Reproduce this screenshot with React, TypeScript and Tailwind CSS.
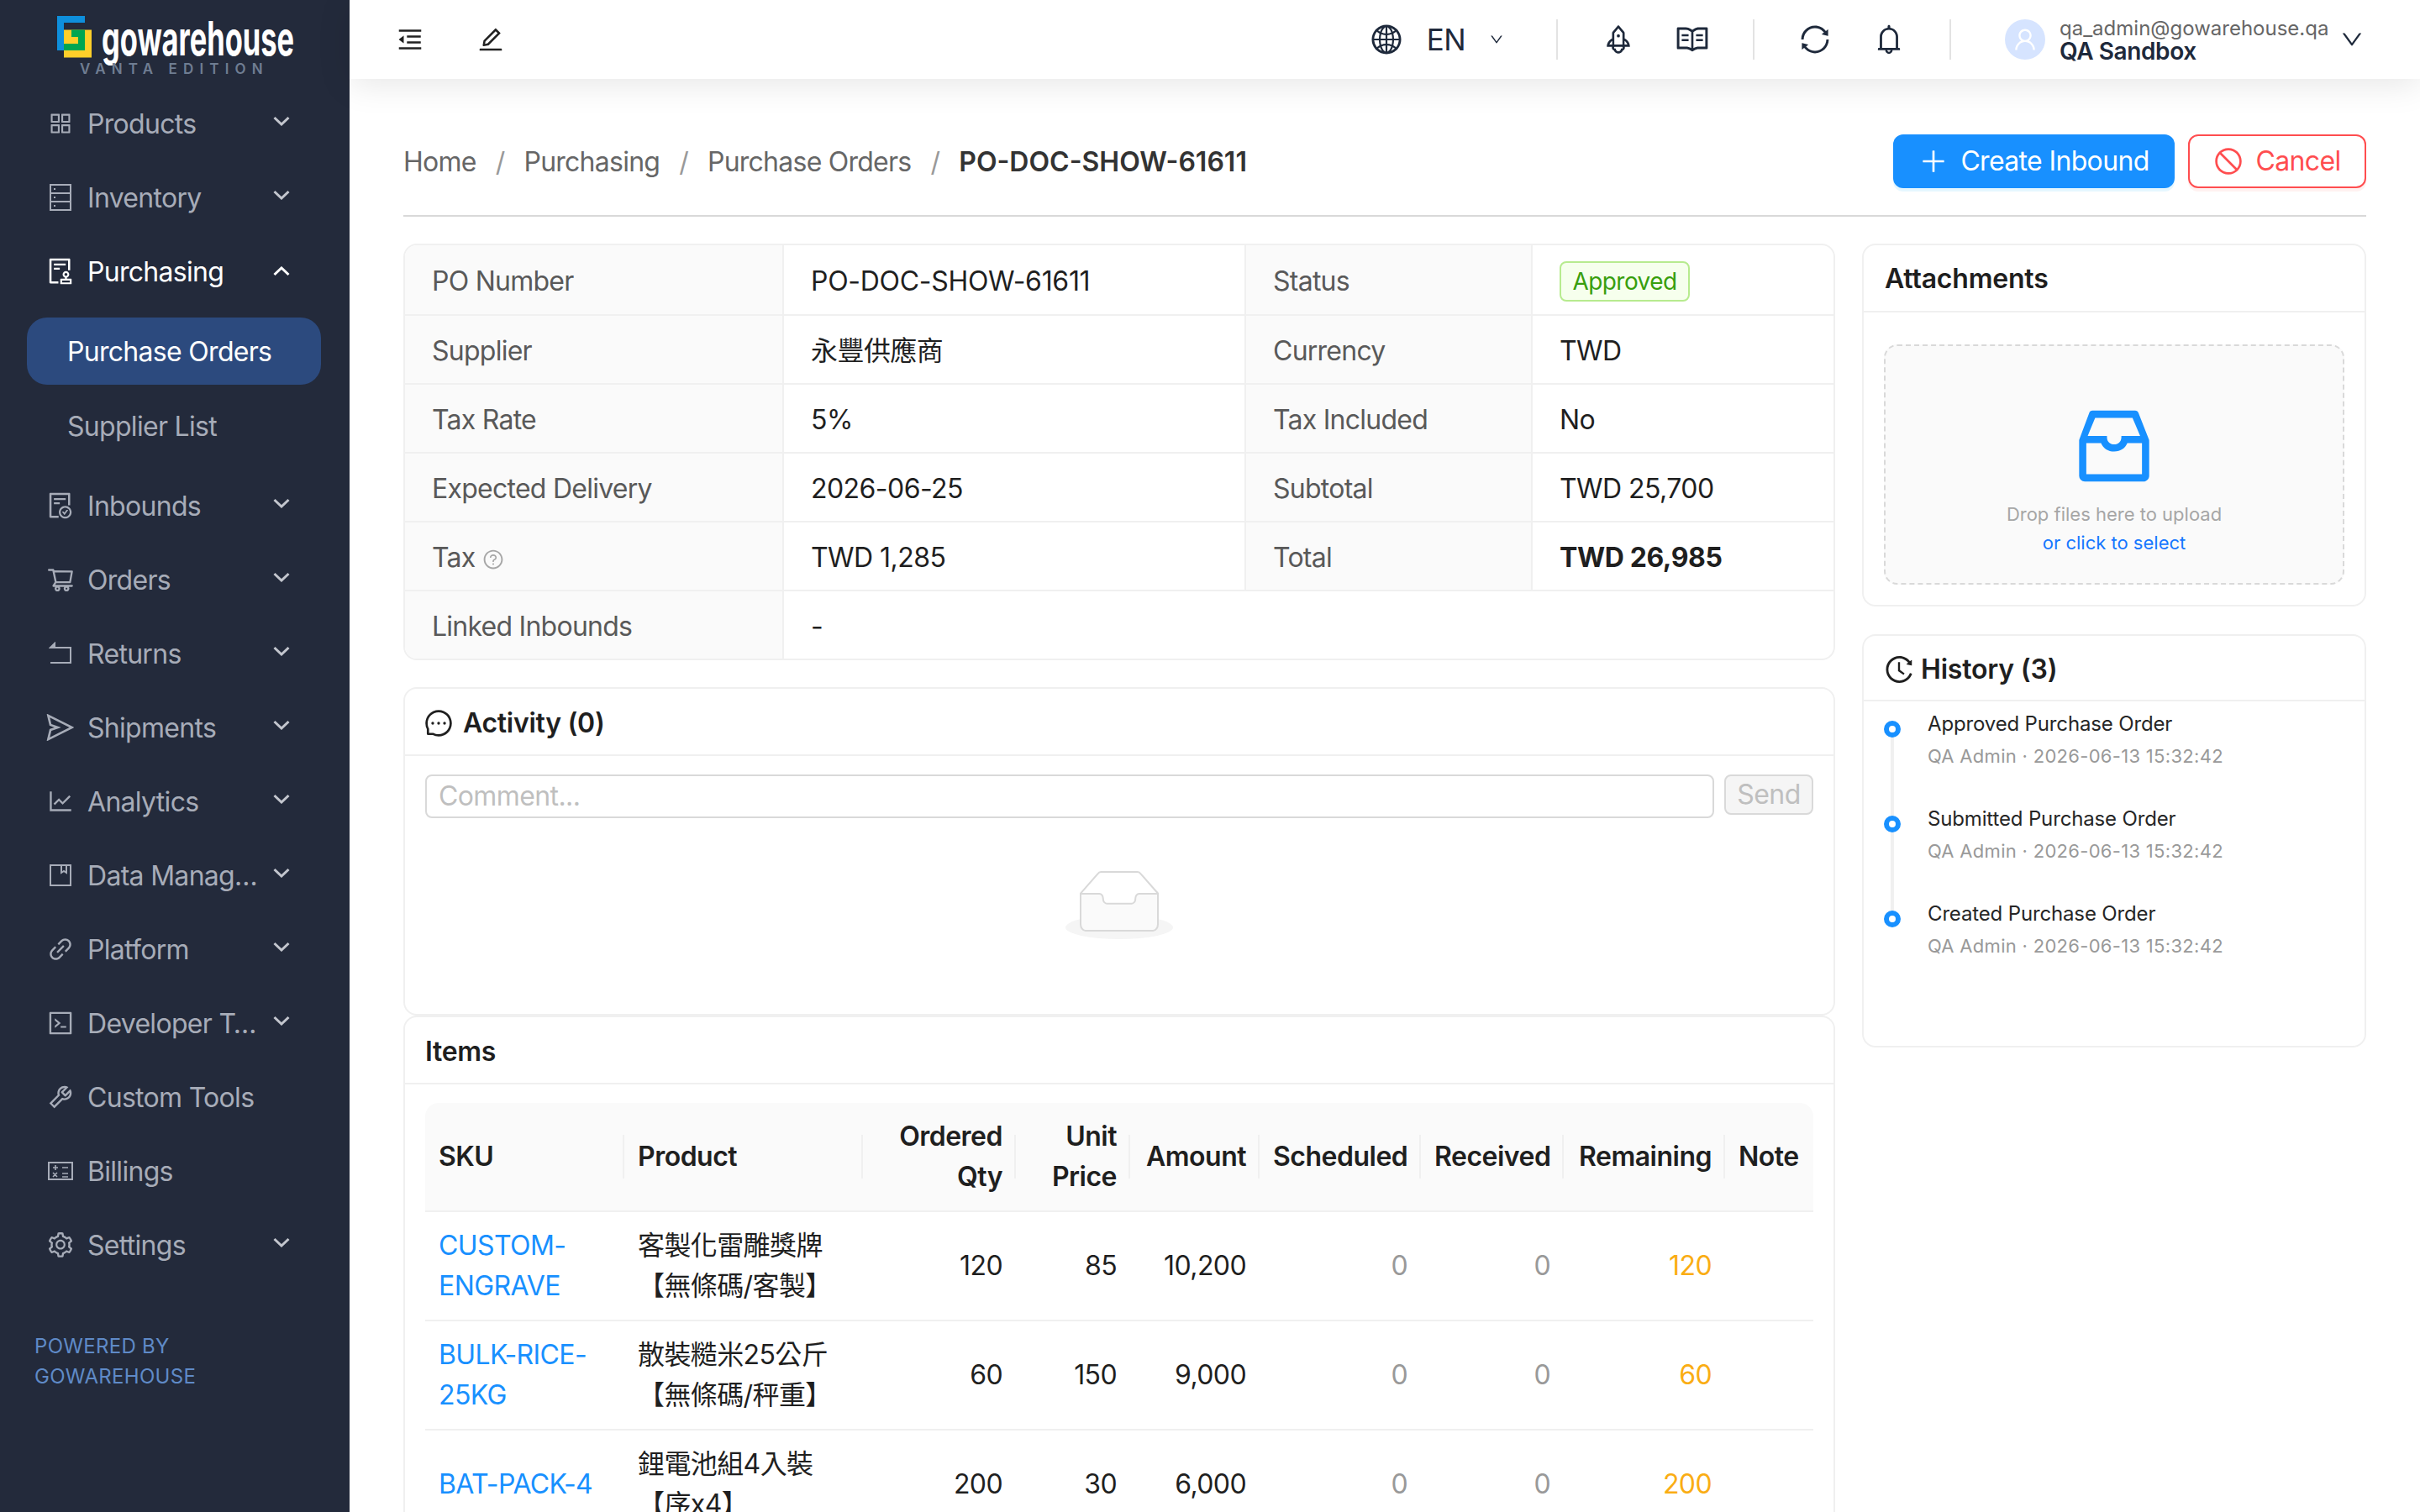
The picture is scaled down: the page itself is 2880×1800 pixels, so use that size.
import type { ReactNode } from "react";
import {
  AiOutlineAppstore,
  AiOutlineAudit,
  AiOutlineBell,
  AiOutlineCode,
  AiOutlineDown,
  AiOutlineEdit,
  AiOutlineFileDone,
  AiOutlineGlobal,
  AiOutlineHistory,
  AiOutlineInbox,
  AiOutlineLineChart,
  AiOutlineLink,
  AiOutlineMenuFold,
  AiOutlineMessage,
  AiOutlinePlus,
  AiOutlineQuestionCircle,
  AiOutlineRead,
  AiOutlineRocket,
  AiOutlineSend,
  AiOutlineSetting,
  AiOutlineShoppingCart,
  AiOutlineStop,
  AiOutlineSync,
  AiOutlineTool,
  AiOutlineUser,
} from "react-icons/ai";

function InventoryIcon() {
  return (
    <svg width="28" height="32" viewBox="0 0 28 32" fill="none" stroke="currentColor" strokeWidth="2">
      <rect x="2" y="1" width="24" height="30" />
      <path d="M2 11h24M2 21h24" />
      <path d="M6 6h2M6 16h2M6 26h2" />
    </svg>
  );
}

function ReturnsIcon() {
  return (
    <svg width="28" height="28" viewBox="0 0 28 28" fill="none" stroke="currentColor" strokeWidth="2">
      <path d="M2 25h24V7H6" />
      <path d="M7 2 2 7l5 0z" fill="currentColor" />
    </svg>
  );
}

function DataIcon() {
  return (
    <svg width="28" height="28" viewBox="0 0 28 28" fill="none" stroke="currentColor" strokeWidth="2">
      <rect x="2" y="2" width="24" height="24" />
      <path d="M15 2v9l3-2 3 2V2" />
    </svg>
  );
}

function BillingsIcon() {
  return (
    <svg width="30" height="22" viewBox="0 0 30 22" fill="none" stroke="currentColor" strokeWidth="2">
      <rect x="1" y="1" width="28" height="20" />
      <path d="M6 7h6M9 4v6M17 7h7M6 13l5 5M11 13l-5 5M17 14h7M17 18h7" strokeWidth="1.6" />
    </svg>
  );
}

function Chevron({ up }: { up?: boolean }) {
  return (
    <svg width="20" height="12" viewBox="0 0 20 12" fill="none" stroke="currentColor" strokeWidth="3" className={up ? "rotate-180" : ""}>
      <path d="M1.5 2 10 10l8.5-8" />
    </svg>
  );
}

function LogoMark() {
  return (
    <svg width="41" height="50" viewBox="0 0 41 50" className="shrink-0">
      <path d="M0 0h33v8H8v33H0z" fill="#0e8fdc" />
      <rect x="8" y="16.5" width="33" height="33" fill="#ffcf2a" />
      <path d="M17 16.5h16V41H8v-8h17v-8h-8z" fill="#00a651" />
    </svg>
  );
}

function EmptyIcon() {
  return (
    <svg width="128" height="82" viewBox="0 0 64 41">
      <g transform="translate(0 1)" fill="none" fillRule="evenodd">
        <ellipse fill="#f5f5f5" cx="32" cy="33" rx="32" ry="7" />
        <g fillRule="nonzero" stroke="#d9d9d9">
          <path d="M55 12.76L44.854 1.258C44.367.474 43.656 0 42.907 0H21.093c-.749 0-1.46.474-1.947 1.257L9 12.761V22h46v-9.24z" />
          <path
            d="M41.613 15.931c0-1.605.994-2.93 2.227-2.931H55v18.137C55 33.26 53.68 35 52.05 35h-40.1C10.32 35 9 33.259 9 31.137V13h11.16c1.233 0 2.227 1.323 2.227 2.928v.022c0 1.605 1.005 2.901 2.237 2.901h14.752c1.232 0 2.237-1.308 2.237-2.913v-.007z"
            fill="#fafafa"
          />
        </g>
      </g>
    </svg>
  );
}

function NavItem({ icon, label, arrow = true }: { icon: ReactNode; label: string; arrow?: boolean }) {
  return (
    <div className="flex h-[80px] items-center pl-[56px] text-[#a7acb8]">
      <span className="flex w-[32px] justify-center">{icon}</span>
      <span className="ml-[16px] w-[205px] truncate pt-[2px]">{label}</span>
      {arrow && (
        <span className="ml-[16px] -mt-[6px] text-[#c3c6ce]">
          <Chevron />
        </span>
      )}
    </div>
  );
}

function Sidebar() {
  return (
    <aside className="flex h-full w-[416px] shrink-0 flex-col bg-[#232a3b] text-[32px] tracking-[-0.7px]">
      <div className="relative h-[107px] shrink-0">
        <div className="absolute left-[68px] top-[19px]">
          <LogoMark />
        </div>
        <span className="absolute left-[121px] top-[21px] origin-left scale-x-[0.615] text-[56px] font-bold leading-[50px] tracking-normal text-white">
          gowarehouse
        </span>
        <span className="absolute left-[95px] top-[72px] text-[17px] font-semibold leading-[20px] tracking-[0.42em] text-[#6f7d92]">
          VANTA EDITION
        </span>
      </div>
      <nav className="flex flex-col gap-[8px]">
        <NavItem icon={<AiOutlineAppstore size={34} />} label="Products" />
        <NavItem icon={<InventoryIcon />} label="Inventory" />
        <div className="flex h-[80px] items-center pl-[56px] text-white">
          <span className="flex w-[32px] justify-center">
            <AiOutlineAudit size={36} className="shrink-0" />
          </span>
          <span className="ml-[16px] w-[205px] truncate pt-[2px]">Purchasing</span>
          <span className="ml-[16px]">
            <Chevron up />
          </span>
        </div>
        <div className="my-[7px] flex flex-col gap-[9px]">
          <div className="ml-[32px] mr-[34px] flex h-[80px] items-center rounded-[24px] bg-[#2c4a7e] pl-[48px] pt-[2px] text-white">Purchase Orders</div>
          <div className="flex h-[80px] items-center pl-[80px] pt-[2px] text-[#a7acb8]">Supplier List</div>
        </div>
        <NavItem icon={<AiOutlineFileDone size={36} className="shrink-0" />} label="Inbounds" />
        <NavItem icon={<AiOutlineShoppingCart size={34} className="shrink-0" />} label="Orders" />
        <NavItem icon={<ReturnsIcon />} label="Returns" />
        <NavItem icon={<AiOutlineSend size={38} className="shrink-0" />} label="Shipments" />
        <NavItem icon={<AiOutlineLineChart size={34} className="shrink-0" />} label="Analytics" />
        <NavItem icon={<DataIcon />} label="Data Management" />
        <NavItem icon={<AiOutlineLink size={34} className="shrink-0" />} label="Platform" />
        <NavItem icon={<AiOutlineCode size={34} className="shrink-0" />} label="Developer Tools" />
        <NavItem icon={<AiOutlineTool size={34} className="shrink-0" />} label="Custom Tools" arrow={false} />
        <NavItem icon={<BillingsIcon />} label="Billings" arrow={false} />
        <NavItem icon={<AiOutlineSetting size={34} className="shrink-0" />} label="Settings" />
      </nav>
      <div className="mt-[63px] pl-[41px] text-[24px] leading-[36px] tracking-[0.3px] text-[#5f8ac7]">
        POWERED BY
        <br />
        GOWAREHOUSE
      </div>
    </aside>
  );
}

function Divider() {
  return <div className="h-[48px] w-[2px] bg-[#e3e3e3]" />;
}

function Header() {
  return (
    <header className="relative z-10 flex h-[94px] shrink-0 items-center bg-white pl-[55px] pr-[66px] text-[#1e293b] shadow-[0_6px_40px_rgba(0,0,0,0.1)]">
      <AiOutlineMenuFold size={34} className="text-[#222]" />
      <AiOutlineEdit size={34} className="ml-[62px] text-[#222]" />
      <div className="ml-auto flex items-center">
        <AiOutlineGlobal size={40} />
        <span className="ml-[28px] text-[35px] leading-none">EN</span>
        <AiOutlineDown size={18} className="ml-[28px] mr-[62px]" />
        <Divider />
        <AiOutlineRocket size={40} className="ml-[52px]" />
        <AiOutlineRead size={42} className="ml-[47px]" />
        <span className="ml-[51px]">
          <Divider />
        </span>
        <AiOutlineSync size={40} className="ml-[52px]" />
        <AiOutlineBell size={40} className="ml-[48px]" />
        <span className="ml-[52px]">
          <Divider />
        </span>
        <div className="ml-[64px] flex h-[48px] w-[48px] items-center justify-center rounded-full bg-[#d6e4ff] text-white">
          <AiOutlineUser size={32} />
        </div>
        <div className="ml-[17px] flex w-[318px] flex-col">
          <span className="whitespace-nowrap text-[24px] leading-[28px] tracking-normal text-[#666]">qa_admin@gowarehouse.qa</span>
          <span className="text-[28px] font-semibold leading-[26px] tracking-[-0.4px]">QA Sandbox</span>
        </div>
        <AiOutlineDown size={30} className="ml-[15px]" />
      </div>
    </header>
  );
}

function Breadcrumbs() {
  return (
    <div className="flex h-[164px] items-center border-b-2 border-[#d9d9d9] pb-[32px] pt-[66px]">
      <div className="flex items-center gap-[23px] pt-[2px] tracking-[-0.75px] text-[#666]">
        <span>Home</span>
        <span className="text-[#999]">/</span>
        <span>Purchasing</span>
        <span className="text-[#999]">/</span>
        <span>Purchase Orders</span>
        <span className="text-[#999]">/</span>
        <span className="font-semibold tracking-normal text-[#333]">PO-DOC-SHOW-61611</span>
      </div>
      <div className="ml-auto flex gap-[16px] tracking-[-0.65px]">
        <button className="flex h-[64px] w-[335px] items-center justify-center gap-[14px] rounded-[12px] bg-[#1890ff] text-white shadow-[0_4px_0_#e6f7ff]">
          <AiOutlinePlus size={36} />
          Create Inbound
        </button>
        <button className="flex h-[64px] w-[212px] items-center justify-center gap-[14px] rounded-[12px] border-2 border-[#ff4d4f] bg-white text-[#ff4d4f] shadow-[0_4px_0_#fff1f0]">
          <AiOutlineStop size={36} />
          Cancel
        </button>
      </div>
    </div>
  );
}

function rowHeight(top?: boolean, last?: boolean) {
  if (top) return "h-[84px] border-b-2";
  if (last) return "h-[80px]";
  return "h-[82px] border-b-2";
}

function Label({ children, top, last }: { children: ReactNode; top?: boolean; last?: boolean }) {
  return <div className={`flex items-center border-r-2 border-[#f0f0f0] bg-[#fafafa] pl-[32px] pt-[3px] tracking-[-0.75px] text-[#595959] ${rowHeight(top, last)}`}>{children}</div>;
}

function Value({ children, top, end, last, span }: { children: ReactNode; top?: boolean; end?: boolean; last?: boolean; span?: boolean }) {
  return (
    <div className={`flex items-center border-[#f0f0f0] pl-[32px] pt-[3px] tracking-[-0.55px] text-[#1f1f1f] ${end ? "" : "border-r-2"} ${rowHeight(top, last)} ${span ? "col-span-3" : ""}`}>
      {children}
    </div>
  );
}

function Details() {
  return (
    <section className="grid grid-cols-[451px_550px_341px_1fr] overflow-hidden rounded-[16px] border-2 border-[#f0f0f0] bg-white">
      <Label top>PO Number</Label>
      <Value top>
        <span className="tracking-[-0.3px]">PO-DOC-SHOW-61611</span>
      </Value>
      <Label top>Status</Label>
      <Value top end>
        <span className="flex h-[48px] w-[155px] items-center justify-center rounded-[8px] border-2 border-[#b7eb8f] bg-[#f6ffed] text-[28px] text-[#389e0d]">Approved</span>
      </Value>
      <Label>Supplier</Label>
      <Value>永豐供應商</Value>
      <Label>Currency</Label>
      <Value end>TWD</Value>
      <Label>Tax Rate</Label>
      <Value>5%</Value>
      <Label>Tax Included</Label>
      <Value end>No</Value>
      <Label>Expected Delivery</Label>
      <Value>2026-06-25</Value>
      <Label>Subtotal</Label>
      <Value end>TWD 25,700</Value>
      <Label>
        Tax
        <AiOutlineQuestionCircle size={26} className="ml-[8px] mt-[4px] text-[#a6a6a6]" />
      </Label>
      <Value>TWD 1,285</Value>
      <Label>Total</Label>
      <Value end>
        <span className="font-bold tracking-[-0.4px]">TWD 26,985</span>
      </Value>
      <Label last>Linked Inbounds</Label>
      <Value end last span>
        -
      </Value>
    </section>
  );
}

function Activity() {
  return (
    <section className="mt-[32px] rounded-[16px] border-2 border-[#f0f0f0] bg-white">
      <div className="flex h-[80px] items-center gap-[11px] border-b-2 border-[#f0f0f0] pl-[22px] pt-[4px] font-semibold tracking-[-0.3px] text-[#1f1f1f]">
        <AiOutlineMessage size={36} />
        Activity (0)
      </div>
      <div className="h-[307px] px-[24px] pt-[22px]">
        <div className="flex items-start gap-[12px]">
          <div className="flex h-[52px] flex-1 items-center rounded-[8px] border-2 border-[#d9d9d9] pl-[14px] text-[#bfbfbf]">Comment...</div>
          <div className="flex h-[48px] w-[106px] items-center justify-center rounded-[8px] border-2 border-[#d9d9d9] bg-[#f5f5f5] text-[#bfbfbf]">Send</div>
        </div>
        <div className="mt-[62px] flex justify-center">
          <EmptyIcon />
        </div>
      </div>
    </section>
  );
}

const columns = [237, 284, 182, 136, 154, 192, 170, 192, 105];
const headers = ["SKU", "Product", "Ordered Qty", "Unit Price", "Amount", "Scheduled", "Received", "Remaining", "Note"];

const rows = [
  { sku: "CUSTOM-ENGRAVE", name: "客製化雷雕獎牌【無條碼/客製】", qty: "120", price: "85", amount: "10,200" },
  { sku: "BULK-RICE-25KG", name: "散裝糙米25公斤【無條碼/秤重】", qty: "60", price: "150", amount: "9,000" },
  { sku: "BAT-PACK-4", name: "鋰電池組4入裝【序x4】", qty: "200", price: "30", amount: "6,000" },
];

function Items() {
  return (
    <section className="rounded-t-[16px] border-x-2 border-t-2 border-[#f0f0f0] bg-white">
      <div className="flex h-[80px] items-center border-b-2 border-[#f0f0f0] pl-[24px] pt-[4px] font-semibold tracking-[-0.3px] text-[#1f1f1f]">Items</div>
      <div className="px-[24px] pt-[22px]">
        <table className="w-full table-fixed border-separate border-spacing-0">
          <colgroup>
            {columns.map((w, i) => (
              <col key={i} style={{ width: w }} />
            ))}
          </colgroup>
          <thead>
            <tr className="bg-[#fafafa] tracking-[-0.5px] text-[#1f1f1f]">
              {headers.map((h, i) => (
                <th
                  key={h}
                  className={`relative h-[129px] border-b-2 border-[#f0f0f0] p-[16px] font-semibold ${i >= 2 && i < 8 ? "text-right" : "text-left"} ${i === 0 ? "rounded-tl-[16px]" : ""} ${i === 8 ? "rounded-tr-[16px]" : ""}`}
                >
                  {h}
                  {i < 8 && <span className="absolute right-0 top-1/2 h-[52px] w-[2px] -translate-y-1/2 bg-[#f0f0f0]" />}
                </th>
              ))}
            </tr>
          </thead>
          <tbody className="text-[#1f1f1f]">
            {rows.map((r) => (
              <tr key={r.sku}>
                <td className="border-b-2 border-[#f0f0f0] p-[16px] text-[#1890ff] [overflow-wrap:anywhere]">{r.sku}</td>
                <td className="border-b-2 border-[#f0f0f0] p-[16px]">{r.name}</td>
                <td className="border-b-2 border-[#f0f0f0] p-[16px] text-right">{r.qty}</td>
                <td className="border-b-2 border-[#f0f0f0] p-[16px] text-right">{r.price}</td>
                <td className="border-b-2 border-[#f0f0f0] p-[16px] text-right">{r.amount}</td>
                <td className="border-b-2 border-[#f0f0f0] p-[16px] text-right text-[#999]">0</td>
                <td className="border-b-2 border-[#f0f0f0] p-[16px] text-right text-[#999]">0</td>
                <td className="border-b-2 border-[#f0f0f0] p-[16px] text-right text-[#faad14]">{r.qty}</td>
                <td className="border-b-2 border-[#f0f0f0] p-[16px]" />
              </tr>
            ))}
          </tbody>
        </table>
      </div>
    </section>
  );
}

function Attachments() {
  return (
    <section className="rounded-[16px] border-2 border-[#f0f0f0] bg-white">
      <div className="flex h-[80px] items-center border-b-2 border-[#f0f0f0] pl-[25px] pt-[2px] font-semibold tracking-[-0.2px] text-[#1f1f1f]">Attachments</div>
      <div className="px-[24px] pb-[24px] pt-[38px]">
        <div className="flex h-[286px] flex-col items-center rounded-[16px] border-2 border-dashed border-[#d9d9d9] bg-[#fafafa] pt-[62px] tracking-normal">
          <AiOutlineInbox size={114} className="text-[#1890ff]" />
          <span className="mt-[6px] text-[22px] leading-[36px] text-[#a6a6a6]">Drop files here to upload</span>
          <span className="-mt-[2px] text-[22px] leading-[36px] text-[#1677ff]">or click to select</span>
        </div>
      </div>
    </section>
  );
}

const history = ["Approved Purchase Order", "Submitted Purchase Order", "Created Purchase Order"];

function History() {
  return (
    <section className="mt-[33px] h-[492px] rounded-[16px] border-2 border-[#f0f0f0] bg-white">
      <div className="flex h-[78px] items-center gap-[7px] border-b-2 border-[#f0f0f0] pl-[23px] pt-[3px] font-semibold tracking-[-0.2px] text-[#1f1f1f]">
        <AiOutlineHistory size={38} />
        History (3)
      </div>
      <div className="pl-[24px] pt-[8px]">
        {history.map((h, i) => (
          <div key={h} className="relative h-[113px] pl-[52px]">
            {i < 2 && <span className="absolute left-[8px] top-[26px] h-[113px] w-[4px] bg-[#f0f0f0]" />}
            <span className="absolute left-0 top-[15px] h-[20px] w-[20px] rounded-full border-[6px] border-[#1890ff] bg-white" />
            <div className="text-[24px] leading-[38px] tracking-[-0.15px] text-[#262626]">{h}</div>
            <div className="text-[22px] leading-[38px] tracking-[0.3px] text-[#999]">QA Admin · 2026-06-13 15:32:42</div>
          </div>
        ))}
      </div>
    </section>
  );
}

export default function App() {
  return (
    <div className="flex h-[1800px] w-[2880px] overflow-hidden bg-white text-[32px] leading-[48px] tracking-[-0.6px] [font-family:Inter,'Noto_Sans_CJK_TC',sans-serif]">
      <Sidebar />
      <main className="flex min-w-0 flex-1 flex-col">
        <Header />
        <div className="px-[64px]">
          <Breadcrumbs />
          <div className="mt-[32px] grid grid-cols-[1704px_600px] gap-x-[32px]">
            <div>
              <Details />
              <Activity />
              <Items />
            </div>
            <div>
              <Attachments />
              <History />
            </div>
          </div>
        </div>
      </main>
    </div>
  );
}
